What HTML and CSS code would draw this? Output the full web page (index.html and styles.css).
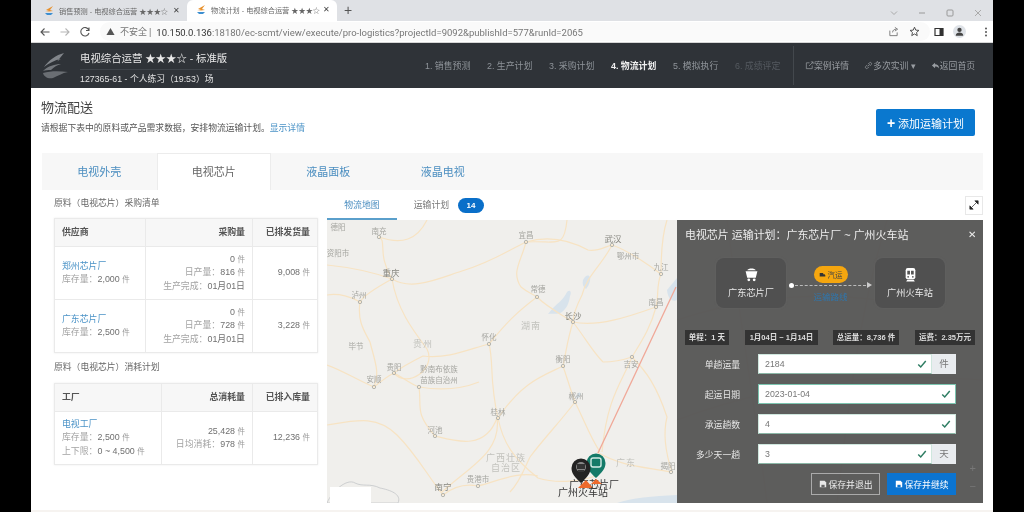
FILE: index.html
```html
<!DOCTYPE html>
<html lang="zh-CN">
<head>
<meta charset="utf-8">
<title>物流计划 - 电视综合运营</title>
<link rel="stylesheet" href="styles.css">
</head>
<body>
<div class="screen">
  <div class="bezel"></div>
  <div class="window">
    <div class="tabstrip">
      <div class="btab">
        <svg class="favicon" viewBox="0 0 12 12"><path d="M10 1 3 5l3 1-4 1 8-1-3-1z" fill="#e8912d"/><path d="M2 8h8l-2 2H4z" fill="#3d8fd1"/></svg>
        <span class="btab-title">销售预测 - 电视综合运营 ★★★☆</span><span class="btab-x">✕</span>
      </div>
      <div class="btab btab-active">
        <svg class="favicon" viewBox="0 0 12 12"><path d="M10 1 3 5l3 1-4 1 8-1-3-1z" fill="#e8912d"/><path d="M2 8h8l-2 2H4z" fill="#3d8fd1"/></svg>
        <span class="btab-title">物流计划 - 电视综合运营 ★★★☆</span><span class="btab-x">✕</span>
      </div>
      <span class="newtab">+</span>
      <div class="winctl">
        <svg viewBox="0 0 10 10"><path d="M2 3.500 5 6.500 8 3.500" fill="none" stroke="#aaa"/></svg>
        <svg viewBox="0 0 10 10"><path d="M2 5h6" stroke="#999"/></svg>
        <svg viewBox="0 0 10 10"><rect x="2" y="2" width="6" height="6" rx="1" fill="none" stroke="#999"/></svg>
        <svg viewBox="0 0 10 10"><path d="M2 2l6 6M8 2l-6 6" stroke="#aaa"/></svg>
      </div>
    </div>
    <div class="toolbar">
      <svg class="tool" viewBox="0 0 12 12"><path d="M10.500 6H2M5.500 2.500 2 6l3.500 3.500" fill="none" stroke="#555" stroke-width="1.100"/></svg>
      <svg class="tool" viewBox="0 0 12 12"><path d="M1.500 6H10M6.500 2.500 10 6 6.500 9.500" fill="none" stroke="#b5b5b5" stroke-width="1.100"/></svg>
      <svg class="tool" viewBox="0 0 12 12"><path d="M9.800 4A4.200 4.200 0 1 0 10 7M10 1.500V4.500H7" fill="none" stroke="#555" stroke-width="1.100"/></svg>
      <div class="omnibox">
        <svg class="warn" viewBox="0 0 10 10"><path d="M5 1 9.500 9H.5z" fill="#555"/></svg>
        <span class="insecure">不安全</span><span class="sep">|</span>
        <span class="url"><b>10.150.0.136</b>:18180/ec-scmt/view/execute/pro-logistics?projectId=9092&amp;publishId=577&amp;runId=2065</span>
        <svg class="omni-icon" viewBox="0 0 12 12"><path d="M2 5v5.500h8V7M5 7c0-2.500 2-3.500 4-3.500M7.500 1.500l3 2-3 2" fill="none" stroke="#777"/></svg>
        <svg class="omni-icon" viewBox="0 0 12 12"><path d="M6 1.300 7.400 4.500 10.800 4.800 8.200 7.100 9 10.500 6 8.700 3 10.500 3.800 7.100 1.200 4.800 4.600 4.500z" fill="none" stroke="#444"/></svg>
      </div>
      <div class="toolright">
        <svg class="tool" viewBox="0 0 12 12"><path d="M2 2.500h8v7H2z" fill="none" stroke="#333" stroke-width="1.200"/><path d="M6.500 2.500H10v7H6.500z" fill="#333"/></svg>
        <span class="avatar"><svg viewBox="0 0 12 12"><circle cx="6" cy="4.500" r="2" fill="#444"/><path d="M2.500 10c0-4 7-4 7 0z" fill="#444"/></svg></span>
        <svg class="tool" viewBox="0 0 12 12"><circle cx="6" cy="2.500" r="1" fill="#555"/><circle cx="6" cy="6" r="1" fill="#555"/><circle cx="6" cy="9.500" r="1" fill="#555"/></svg>
      </div>
    </div>
    <header class="appbar">
      <svg class="logo" viewBox="0 0 27 28"><path d="M22 1C14 3 7 8 2 15c5-4 11-7 17-8-2 1-4 2-5 4z" fill="#82868b"/><path d="M1 19c5-5 12-7 18-7-4 1-7 3-10 6-3 0-6 0-8 1z" fill="#74787d"/><path d="M1 21c7-2 16-2 25-1-6 1-10 4-15 6-5 1-9-1-10-5z" fill="#6a6e73"/></svg>
      <div class="brand">
        <div class="brand-title">电视综合运营 ★★★☆ - 标准版</div>
        <div class="brand-sub">127365-61 - 个人练习（19:53）场</div>
      </div>
      <nav class="steps">
        <span class="step">1. 销售预测</span>
        <span class="step">2. 生产计划</span>
        <span class="step">3. 采购计划</span>
        <span class="step step-on">4. 物流计划</span>
        <span class="step">5. 模拟执行</span>
        <span class="step step-off">6. 成绩评定</span>
      </nav>
      <nav class="actions">
        <span class="action"><svg viewBox="0 0 10 10"><path d="M5 2H1.500v6.500H8V5M4.500 5.500 9 1M6.500 1H9v2.500" fill="none" stroke="#999da2" stroke-width=".8"/></svg>案例详情</span>
        <span class="action action-wide"><svg viewBox="0 0 10 10"><path d="M4 6 6.500 3.500M3.500 4.500 2 6a1.400 1.400 0 0 0 2 2l1.500-1.500M4.500 3.500 6 2a1.400 1.400 0 0 1 2 2L6.500 5.500" fill="none" stroke="#999da2" stroke-width=".8"/></svg> 多次实训 ▾</span>
        <span class="action"><svg viewBox="0 0 10 10"><path d="M4.500 2 1 5l3.500 3V6.200c2 0 3.500.5 4.500 2 0-3-2-4.500-4.500-4.500z" fill="#999da2"/></svg>返回首页</span>
      </nav>
    </header>
    <main class="page">
      <section class="head">
        <div>
          <h1 class="head-title">物流配送</h1>
          <p class="head-desc">请根据下表中的原料或产品需求数据，安排物流运输计划。<a class="link">显示详情</a></p>
        </div>
        <button class="add-btn"><span class="add-plus">+</span> 添加运输计划</button>
      </section>
      <div class="ptabs">
        <span class="ptab">电视外壳</span>
        <span class="ptab ptab-on">电视芯片</span>
        <span class="ptab">液晶面板</span>
        <span class="ptab">液晶电视</span>
      </div>
      <div class="columns">
        <div class="left">
          <div class="sec-title">原料（电视芯片）采购清单</div>
          <table class="tbl tbl-a">
            <colgroup><col class="c-a1"><col class="c-a2"><col></colgroup>
            <tr class="hdr"><th class="l">供应商</th><th>采购量</th><th>已排发货量</th></tr>
            <tr>
              <td class="l"><a class="link">郑州芯片厂</a><br><span class="mut">库存量：</span><span class="val">2,000 <i>件</i></span></td>
              <td><span class="val">0 <i>件</i></span><br><span class="mut">日产量：</span><span class="val">816 <i>件</i></span><br><span class="mut">生产完成：</span><span class="val">01月01日</span></td>
              <td><span class="val">9,008 <i>件</i></span></td>
            </tr>
            <tr>
              <td class="l"><a class="link">广东芯片厂</a><br><span class="mut">库存量：</span><span class="val">2,500 <i>件</i></span></td>
              <td><span class="val">0 <i>件</i></span><br><span class="mut">日产量：</span><span class="val">728 <i>件</i></span><br><span class="mut">生产完成：</span><span class="val">01月01日</span></td>
              <td><span class="val">3,228 <i>件</i></span></td>
            </tr>
          </table>
          <div class="sec-title sec-second">原料（电视芯片）消耗计划</div>
          <table class="tbl tbl-b">
            <colgroup><col class="c-b1"><col class="c-b2"><col></colgroup>
            <tr class="hdr"><th class="l">工厂</th><th>总消耗量</th><th>已排入库量</th></tr>
            <tr>
              <td class="l"><a class="link">电视工厂</a><br><span class="mut">库存量：</span><span class="val">2,500 <i>件</i></span><br><span class="mut">上下限：</span><span class="val">0 ~ 4,500 <i>件</i></span></td>
              <td><span class="val">25,428 <i>件</i></span><br><span class="mut">日均消耗：</span><span class="val">978 <i>件</i></span></td>
              <td><span class="val">12,236 <i>件</i></span></td>
            </tr>
          </table>
        </div>
        <div class="right">
          <div class="mtabs">
            <span class="mtab mtab-on">物流地图</span>
            <span class="mtab">运输计划</span>
            <span class="badge">14</span>
            <span class="expand"><svg viewBox="0 0 12 12"><path d="M7 1h4v4zM5 11H1V7zM9 3 3 9" fill="#222" stroke="#222" stroke-width=".8"/></svg></span>
          </div>
          <div class="map">
            <svg class="map-svg" viewBox="0 0 656 283">
              <g fill="#d8e3ec">
                <path d="M226 88c6-6 10-8 14-16 3-3 5 0 3 4-1 8-4 13-8 16-5 3-8 1-14 2z"/>
                <path d="M256 60c2-4 5-6 7-3 1 4-2 10-4 12-3-2-4-5-3-9z"/>
                <path d="M340 70l10-12v22c-4 2-9 0-10-10z"/>
                <path d="M290 283c15-5 35-7 60-8v8z"/>
                <path d="M250 125c1-3 3-3 4-1-1 3-3 5-5 4z" transform="translate(0 50)"/>
              </g>
              <g fill="none" stroke="#f7e3c3" stroke-width="1.200">
                <path d="M0 45c20 2 40 5 65 14 20 12 45 0 70-8 30-9 45-20 64-29M199 22c20-6 40-4 62 8 10 2 18-4 24-5"/>
                <path d="M65 59c5 30 20 50 35 70 10 20-20 40-33 24M65 59C50 35 60 20 52 17M65 59C45 70 35 78 33 82"/>
                <path d="M33 82c-3 20 5 30 10 40 5 20 10 30 4 45M0 75c12-2 25 2 33 7"/>
                <path d="M199 22c-5 20-15 30-5 45 6 5 10 6 16 10M210 77c10 10 25 18 36 25M210 77c-20 15-30 25-48 47"/>
                <path d="M285 25c-10 20-25 30-30 50-5 10-9 20-9 27M285 25c15 5 30 15 49 29M334 54c-5 12-2 22-5 33M246 102c25 5 55-5 83-15"/>
                <path d="M246 102c-5 15-7 30-10 44M246 102c15 20 20 30 30 40M236 146c5 15 8 25 12 36M248 182c10 20 15 35 25 50"/>
                <path d="M162 124c-20 5-40 15-66 12-10 5-20 10-29 17M162 124c5 20 0 35 9 74M236 146c-20 10-40 15-65 52"/>
                <path d="M67 153c-8 4-15 10-20 14M67 153c10 5 15 10 25 14 3 20-5 25 16 49M92 167c30 5 50-1 60-5"/>
                <path d="M0 205c30-5 50-10 70 10 20 20 30 40 46 60M108 216c20 5 50 15 62-18 5 35-30 50-56 75M171 198c5 25 15 40 40 60 15 5 40 5 60-3"/>
                <path d="M116 275c15-12 30-10 35-9 20-5 40-15 60-10M248 182c-15 20-30 35-45 55-5 10-10 25-20 35"/>
                <path d="M305 137c-10 25-25 40-30 95M305 137c15 15 25 30 35 60-5 20 0 40 5 55M276 142c10 0 20-2 29-5M329 87c-5 20-15 35-24 50"/>
                <path d="M270 232c25 15 50 15 74 20M0 145c15 5 30 15 47 22M340 0c-5 15-6 35-6 54M100 0c-10 20-25 25-48 17M240 0c-3 30-10 20-41 22"/>
                <path d="M350 100c60-20 130-30 200-20M350 200c80-30 180-50 306-40M400 0c10 80 30 200 40 283M560 0c-30 100-40 200-50 283"/>
              </g>
              <path d="M0 283c5-12 20-25 28-20 8 4 15 0 25 5 10 2 22 6 18 15z" fill="none" stroke="#c4c6c9" stroke-width=".8"/>
              <path d="M349 67 271 233" stroke="#f0a898" stroke-width="1.300"/>
              <g fill="none" stroke="#b5b5ae">
                <circle cx="52" cy="17" r="1.700"/><circle cx="65" cy="59" r="1.700"/><circle cx="33" cy="82" r="1.700"/>
                <circle cx="199" cy="22" r="1.700"/><circle cx="285" cy="25" r="1.700"/><circle cx="334" cy="54" r="1.700"/>
                <circle cx="329" cy="87" r="1.700"/><circle cx="210" cy="77" r="1.700"/><circle cx="246" cy="102" r="1.700"/>
                <circle cx="162" cy="124" r="1.700"/><circle cx="67" cy="153" r="1.700"/><circle cx="47" cy="167" r="1.700"/>
                <circle cx="92" cy="167" r="1.700"/><circle cx="171" cy="198" r="1.700"/><circle cx="108" cy="216" r="1.700"/>
                <circle cx="151" cy="266" r="1.700"/><circle cx="116" cy="275" r="1.700"/><circle cx="236" cy="146" r="1.700"/>
                <circle cx="248" cy="182" r="1.700"/><circle cx="305" cy="137" r="1.700"/><circle cx="344" cy="252" r="1.700"/>
              </g>
              <g class="city">
                <text x="11" y="10">德阳</text><text x="52" y="14">南充</text><text x="11" y="36">资阳市</text>
                <text x="64" y="56" class="big">重庆</text><text x="32" y="78">泸州</text><text x="199" y="18">宜昌</text>
                <text x="286" y="22" class="big">武汉</text><text x="301" y="39">鄂州市</text><text x="334" y="50">九江</text>
                <text x="329" y="85">南昌</text><text x="211" y="72">常德</text><text x="246" y="99" class="big">长沙</text>
                <text x="204" y="109" class="region">湖南</text><text x="162" y="120">怀化</text><text x="96" y="127" class="region">贵州</text>
                <text x="29" y="129">毕节</text><text x="67" y="150">贵阳</text><text x="47" y="162">安顺</text>
                <text x="112" y="152">黔南布依族</text><text x="112" y="163">苗族自治州</text>
                <text x="171" y="195">桂林</text><text x="108" y="213">河池</text>
                <text x="179" y="241" class="region">广西壮族</text><text x="179" y="251" class="region">自治区</text>
                <text x="151" y="262">贵港市</text><text x="116" y="270" class="big">南宁</text><text x="236" y="142">衡阳</text>
                <text x="249" y="179">郴州</text><text x="304" y="147">吉安</text><text x="299" y="246" class="region">广东</text>
                <text x="341" y="249">揭阳</text>
              </g>
            </svg>
            <svg class="map-pins" viewBox="0 0 656 283">
              <text x="267" y="268" class="pin-text">广东芯片厂</text>
              <path d="M269 262c-6-6-9.500-9-9.500-15a9.500 9.500 0 0 1 19 0c0 6-3.500 9-9.500 15z" transform="translate(0 -4)" fill="#147a68"/>
              <rect x="264" y="238" width="10" height="9" rx="2" fill="none" stroke="#d5ece6" stroke-width="1.400"/>
              <path d="M269 259 264 264h11z" fill="#ee6a2c"/>
              <path d="M254 267c-6-6-9.500-9-9.500-15a9.500 9.500 0 0 1 19 0c0 6-3.500 9-9.500 15z" transform="translate(0 -4)" fill="#232323"/>
              <circle cx="254" cy="247" r="5" fill="#888"/>
              <path d="M250 244h8v5h-8zM251 250h6v2h-6z" fill="#333"/>
              <path d="M259 260 251 268h15z" fill="#ee6a2c"/>
              <text x="256" y="276" class="pin-text">广州火车站</text>
            </svg>
            <div class="map-mask"></div>
            <aside class="panel">
              <div class="panel-head"><span>电视芯片 运输计划：广东芯片厂 ~ 广州火车站</span><span class="panel-x">✕</span></div>
              <div class="route">
                <div class="node">
                  <svg viewBox="0 0 14 14"><path d="M3 3c1-2 7-2 8 0zM1.500 4h11L11 10H3z" fill="#fff"/><circle cx="4.500" cy="12" r="1.300" fill="#fff"/><circle cx="9.500" cy="12" r="1.300" fill="#fff"/></svg>
                  <span>广东芯片厂</span>
                </div>
                <div class="link-line">
                  <span class="pill"><svg viewBox="0 0 10 8"><path d="M1 1h5v5H1zM6 3h2l1 1.500V6H6z" fill="#333"/></svg>汽运</span>
                  <div class="dash"><i class="dot"></i><i class="dash-line"></i><i class="arrow"></i></div>
                  <span class="route-link">运输路线</span>
                </div>
                <div class="node">
                  <svg viewBox="0 0 14 14"><rect x="2.500" y="1" width="9" height="10.500" rx="2" fill="#fff"/><path d="M4 3.500h2.500V7H4zM7.500 3.500H10V7H7.500z" fill="#555"/><circle cx="4.800" cy="9.200" r=".8" fill="#555"/><circle cx="9.200" cy="9.200" r=".8" fill="#555"/><path d="M4 12h6l1 1.500H3z" fill="#fff"/></svg>
                  <span>广州火车站</span>
                </div>
              </div>
              <div class="stats">
                <span class="stat s1">单程：1 天</span>
                <span class="stat s2">1月04日 ~ 1月14日</span>
                <span class="stat s3">总运量：8,736 件</span>
                <span class="stat s4">运费：2.35万元</span>
              </div>
              <div class="form">
                <div class="frow"><label>单趟运量</label><div class="group"><div class="field">2184<svg class="check" viewBox="0 0 12 12"><path d="M1.500 6.500 4.500 9.500 10.500 2.500" fill="none" stroke="#2f7d63" stroke-width="1.800"/></svg></div><span class="addon">件</span></div></div>
                <div class="frow"><label>起运日期</label><div class="group"><div class="field field-focus">2023-01-04<svg class="check" viewBox="0 0 12 12"><path d="M1.500 6.500 4.500 9.500 10.500 2.500" fill="none" stroke="#2f7d63" stroke-width="1.800"/></svg></div></div></div>
                <div class="frow"><label>承运趟数</label><div class="group"><div class="field">4<svg class="check" viewBox="0 0 12 12"><path d="M1.500 6.500 4.500 9.500 10.500 2.500" fill="none" stroke="#2f7d63" stroke-width="1.800"/></svg></div></div></div>
                <div class="frow"><label>多少天一趟</label><div class="group"><div class="field">3<svg class="check" viewBox="0 0 12 12"><path d="M1.500 6.500 4.500 9.500 10.500 2.500" fill="none" stroke="#2f7d63" stroke-width="1.800"/></svg></div><span class="addon">天</span></div></div>
              </div>
              <div class="panel-btns">
                <button class="pbtn pbtn-ghost"><svg viewBox="0 0 10 10"><path d="M1 1h6l2 2v6H1z" fill="#e8e8e8"/><path d="M3 6h4v3H3z" fill="#666"/></svg>保存并退出</button>
                <button class="pbtn pbtn-blue"><svg viewBox="0 0 10 10"><path d="M1 1h6l2 2v6H1z" fill="#fff"/><path d="M3 6h4v3H3z" fill="#0b74d1"/></svg>保存并继续</button>
              </div>
              <div class="zoomctl"><span>+</span><span>−</span></div>
            </aside>
          </div>
        </div>
      </div>
      <div class="page-foot"></div>
    </main>
  </div>
  <div class="bezel"></div>
</div>
</body>
</html>
```

FILE: styles.css
```css
* { box-sizing: border-box; }
html, body { margin: 0; height: 512px; overflow: hidden; background: #000; }
body { font-family: "Liberation Sans", "Noto Sans CJK SC", sans-serif; color: #555; }

.screen { display: flex; height: 512px; filter: blur(0.4px); }
.bezel { width: 31px; flex: none; background: #000; }
.window { width: 962px; flex: none; background: #fff; height: 512px; overflow: hidden; }

/* browser chrome */
.tabstrip { height: 21px; background: #dfe1e5; display: flex; align-items: flex-end; font-size: 7.200px; color: #666; }
.btab { width: 156px; height: 19px; display: flex; align-items: center; padding: 0 7px 2px 12px; }
.btab-active { width: 150px; height: 21px; background: #fff; border-radius: 6px 6px 0 0; padding: 0 7px 2px 8px; }
.favicon { width: 12px; height: 12px; flex: none; margin-right: 4px; }
.btab-title { flex: 1; white-space: nowrap; overflow: hidden; }
.btab-x { font-size: 8px; color: #444; margin-left: 3px; }
.newtab { font-size: 14px; line-height: 19px; color: #555; margin-left: 7px; height: 20px; }
.winctl { margin-left: auto; display: flex; gap: 18px; padding: 0 10px 3px 0; }
.winctl svg { width: 10px; height: 10px; }

.toolbar { height: 22px; background: #fff; display: flex; align-items: center; padding-left: 8px; border-bottom: 1px solid #d6d6d6; }
.tool { width: 12px; height: 12px; flex: none; margin-right: 8px; }
.omnibox { margin-left: 1px; width: 830px; height: 19px; border-radius: 10px; background: #fafafa; display: flex; align-items: center; padding-left: 6px; font-size: 9px; color: #666; white-space: nowrap; }
.warn { width: 9px; height: 9px; margin-right: 5px; }
.insecure { color: #777; }
.sep { margin: 0 5px 0 2px; color: #777; }
.url { flex: 1; font-size: 9.500px; color: #777; font-family: Roboto, "Liberation Sans", sans-serif; padding-top: 1px; }
.url b { font-weight: 400; color: #333; }
.omni-icon { width: 11px; height: 11px; margin-right: 10px; flex: none; }
.toolright { display: flex; align-items: center; margin-left: 3px; }
.toolright .tool { margin-right: 0; }
.avatar { width: 13px; height: 13px; border-radius: 50%; background: #dfe3e8; margin: 0 14px 0 8px; display: flex; }
.avatar svg { width: 13px; height: 13px; }

/* app header */
.appbar { height: 45px; background: #2f3338; display: flex; align-items: center; padding: 0 18px 0 11px; }
.logo { width: 27px; height: 28px; flex: none; }
.brand { margin-left: 11px; width: 147px; flex: none; }
.brand-title { font-size: 10.400px; line-height: 21px; color: #e9e9e9; white-space: nowrap; border-bottom: 1px solid #3f444a; height: 24px; padding-top: 2px; }
.brand-sub { font-size: 8.800px; line-height: 14px; color: #e2e2e2; white-space: nowrap; padding-top: 2px; }
.steps { margin-left: 198px; display: flex; gap: 17px; }
.step { font-size: 8.900px; color: #8f949a; white-space: nowrap; width: 45px; }
.step-on { color: #f0f0f0; font-weight: 700; }
.step-off { color: #555a60; }
.actions { margin-left: auto; height: 39px; border-left: 1px solid #43484d; display: flex; align-items: center; gap: 15px; padding-left: 11px; }
.action { font-size: 8.800px; color: #999da2; white-space: nowrap; display: flex; align-items: center; }
.action svg { width: 9px; height: 9px; flex: none; margin-right: 0; }

/* page */
.page { padding: 0 10px; }
.link { color: #4b93c7; }
.head { height: 65px; display: flex; justify-content: space-between; padding: 10px 8px 0 0; }
.head-title { margin: 0; font-size: 13px; font-weight: 400; line-height: 20px; color: #444; }
.head-desc { margin: 3px 0 0; font-size: 8.800px; line-height: 14px; color: #555; white-space: nowrap; }
.add-btn { margin-top: 11px; width: 99px; height: 27px; border: 0; border-radius: 2px; background: #0a78cf; color: #fff; font: inherit; font-size: 11px; white-space: nowrap; padding: 0; }
.add-plus { font-size: 14px; font-weight: 700; line-height: 14px; }

.ptabs { height: 37px; margin-left: 1px; background: #f7f7f7; display: flex; }
.ptab { width: 114.500px; text-align: center; font-size: 11px; line-height: 38px; color: #4b8ec0; }
.ptab-on { background: #fff; color: #666; border: 1px solid #ececec; border-bottom: 0; line-height: 36px; }

.columns { display: flex; }
.left { width: 286px; flex: none; padding: 6px 9px 0 13px; }
.sec-title { font-size: 8.800px; line-height: 14px; color: #666; margin-bottom: 8px; }
.sec-second { margin: 7px 0 9px; }
.tbl { width: 264px; border-collapse: collapse; table-layout: fixed; font-size: 8.900px; line-height: 13.300px; box-shadow: 0 0 2px rgba(0,0,0,.08); }
.tbl th, .tbl td { border: 1px solid #eaeaea; text-align: right; padding: 0 7px; white-space: nowrap; }
.tbl .l { text-align: left; }
.hdr { height: 28px; background: #f7f7f7; }
.hdr th { color: #555; font-weight: 700; font-size: 8.900px; }
.tbl tr:not(.hdr) { height: 53px; }
.c-a1 { width: 91px; }
.c-a2 { width: 107px; }
.c-b1 { width: 107px; }
.c-b2 { width: 91px; }
.mut { color: #a3a3a3; }
.val { color: #707070; }
.val i { font-style: normal; font-size: 7.500px; color: #999; }

.right { width: 656px; flex: none; }
.mtabs { height: 30px; display: flex; align-items: center; font-size: 8.900px; color: #777; }
.mtab { width: 70px; text-align: center; line-height: 30px; height: 30px; }
.mtab + .mtab { width: 61px; padding-left: 8px; }
.mtab-on { color: #4b8ec0; border-bottom: 2px solid #5a9fcb; }
.badge { width: 26px; height: 15px; border-radius: 8px; background: #0a6fc9; color: #fff; font-size: 8px; font-weight: 700; line-height: 15px; text-align: center; }
.expand { margin-left: auto; width: 18px; height: 19px; border: 1px solid #e8e8e8; display: flex; align-items: center; justify-content: center; }
.expand svg { width: 10px; height: 10px; }

/* map: a free canvas */
.map { position: relative; width: 656px; height: 283px; background: #f0efec; overflow: hidden; }
.map-svg { position: absolute; left: 0; top: 0; width: 656px; height: 283px; filter: blur(.5px); }
.map-pins { position: absolute; left: 0; top: 0; width: 656px; height: 283px; }
.city text { font-family: "Noto Sans CJK SC", sans-serif; font-size: 7.500px; fill: #a5a5a0; text-anchor: middle; }
.city .big { font-size: 8.500px; fill: #86867f; }
.city .region { font-size: 9px; fill: #c2c2bd; letter-spacing: 1px; }
.pin-text { font-family: "Noto Sans CJK SC", sans-serif; font-size: 10px; fill: #333; text-anchor: middle; }
.map-mask { position: absolute; left: 3px; bottom: 0; width: 41px; height: 16px; background: #fff; }

.panel { position: absolute; right: 0; top: 0; width: 306px; height: 283px; background: rgba(84,84,84,.95); color: #eee; padding: 0 27px 0 8px; }
.panel-head { height: 28px; display: flex; justify-content: space-between; align-items: center; font-size: 10.950px; color: #eee; white-space: nowrap; margin-right: -20px; }
.panel-x { font-size: 10px; }
.route { display: flex; justify-content: space-between; padding: 10px 11px 0 31px; }
.node { width: 70px; height: 50px; border-radius: 8px; background: #505050; box-shadow: 0 0 2px #666; display: flex; flex-direction: column; align-items: center; justify-content: center; gap: 3px; font-size: 9.200px; color: #e8e8e8; }
.node svg { width: 15px; height: 15px; }
.link-line { width: 84px; display: flex; flex-direction: column; align-items: center; }
.pill { margin-top: 8px; width: 34px; height: 17px; border-radius: 9px; background: #f5a60f; color: #444; font-size: 7.500px; display: flex; align-items: center; justify-content: center; gap: 2px; }
.pill svg { width: 7px; height: 6px; }
.dash { width: 84px; height: 8px; margin-top: -2px; display: flex; align-items: center; }
.dot { width: 5px; height: 5px; border-radius: 50%; background: #fff; flex: none; }
.dash-line { flex: 1; border-top: 1px dashed #bbb; margin: 0 1px; }
.arrow { width: 0; height: 0; border-left: 5px solid #ccc; border-top: 3px solid transparent; border-bottom: 3px solid transparent; margin-right: 1px; }
.route-link { color: #2f76ad; font-size: 8.500px; line-height: 13px; margin-top: 2px; }
.stats { margin: 22px -20px 0 0; height: 15px; display: flex; font-size: 7.500px; font-weight: 700; color: #ddd; white-space: nowrap; }
.stat { height: 15px; line-height: 15px; background: #333; text-align: center; }
.s1 { width: 44px; }
.s2 { width: 73px; margin-left: 16px; }
.s3 { width: 66px; margin-left: 15px; }
.s4 { width: 60px; margin-left: 16px; }
.form { padding-top: 9px; }
.frow { display: flex; align-items: center; height: 20px; margin-bottom: 10px; }
.frow label { width: 55px; flex: none; text-align: right; font-size: 8.800px; color: #e6e6e6; white-space: nowrap; }
.group { margin-left: 18px; flex: 1; display: flex; height: 20px; }
.field { flex: 1; background: #fff; border: 1px solid #cfe7de; border-bottom-color: #8bb7a7; display: flex; align-items: center; padding: 0 4px 0 6px; font-size: 8.800px; color: #777; }
.field-focus { border-color: #7cc5b0; }
.check { width: 10px; height: 10px; margin-left: auto; }
.addon { width: 24px; background: #e9ecef; color: #777; font-size: 9.500px; text-align: center; line-height: 20px; }
.panel-btns { display: flex; justify-content: flex-end; gap: 7px; margin-top: -1px; }
.pbtn { width: 69px; height: 22px; font: inherit; font-size: 8.800px; display: flex; align-items: center; justify-content: center; gap: 2px; padding: 0; white-space: nowrap; color: #eee; }
.pbtn svg { width: 8px; height: 8px; }
.pbtn-ghost { background: transparent; border: 1px solid #aaa; }
.pbtn-blue { background: #0b74d1; border: 0; color: #fff; }
.zoomctl { position: absolute; right: 7px; bottom: 8px; display: flex; flex-direction: column; font-size: 11px; line-height: 18px; color: #777; }
.page-foot { height: 2px; margin: 7px -10px 0; background: #f6f3f0; }
```
